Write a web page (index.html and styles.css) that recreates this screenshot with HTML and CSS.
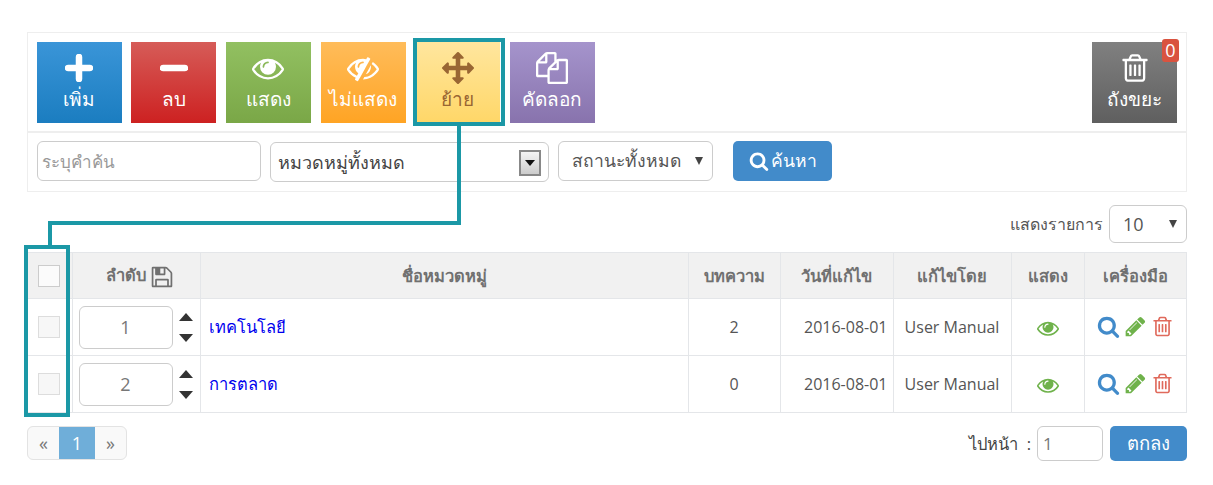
FILE: index.html
```html
<!DOCTYPE html>
<html lang="th">
<head>
<meta charset="utf-8">
<title>หมวดหมู่</title>
<link rel="stylesheet" href="styles.css">
</head>
<body>
<svg class="defs" width="0" height="0" aria-hidden="true">
  <symbol id="i-eye" viewBox="0 0 1792 1792"><path d="M1664 960q-152-236-381-353 61 104 61 225 0 185-131.500 316.500t-316.500 131.500-316.500-131.500-131.500-316.500q0-121 61-225-229 117-381 353 133 205 333.500 326.500t434.500 121.500 434.500-121.500 333.500-326.500zm-720-384q0-20-14-34t-34-14q-125 0-214.500 89.500t-89.500 214.500q0 20 14 34t34 14 34-14 14-34q0-86 61-147t147-61q20 0 34-14t14-34zm848 384q0 34-20 69-140 230-376.500 368.500t-499.500 138.500-499.500-139-376.500-368q-20-35-20-69t20-69q140-229 376.500-368t499.500-139 499.500 139 376.500 368q20 35 20 69z"/></symbol>
  <symbol id="i-eye-slash" viewBox="0 0 1792 1792"><path d="M555 1335l78-141q-87-63-136-159t-49-203q0-121 61-225-229 117-381 353 167 258 427 375zm389-759q0-20-14-34t-34-14q-125 0-214.500 89.500t-89.500 214.500q0 20 14 34t34 14 34-14 14-34q0-86 61-147t147-61q20 0 34-14t14-34zm363-191q0 7-1 9-105 188-315 566t-316 567l-49 89q-10 16-28 16-12 0-134-70-16-10-16-28 0-12 44-87-143-65-263.500-173t-208.500-245q-20-31-20-69t20-69q153-235 380-371t496-136q89 0 180 17l54-97q10-16 28-16 5 0 18 6t31 15.500 33 18.500 31.500 18.500 19.500 11.500q16 10 16 27zm37 447q0 139-79 253.500t-209 164.500l280-502q8 45 8 84zm448 128q0 35-20 69-39 64-109 145-150 172-347.500 267t-419.500 95l74-132q212-18 392.500-137t301.500-307q-115-179-282-294l63-112q95 64 182.500 153t144.500 184q20 34 20 69z"/></symbol>
  <symbol id="i-arrows" viewBox="0 0 1792 1792"><path d="M1792 896q0 26-19 45l-256 256q-19 19-45 19t-45-19-19-45v-128h-384v384h128q26 0 45 19t19 45-19 45l-256 256q-19 19-45 19t-45-19l-256-256q-19-19-19-45t19-45 45-19h128v-384h-384v128q0 26-19 45t-45 19-45-19l-256-256q-19-19-19-45t19-45l256-256q19-19 45-19t45 19 19 45v128h384v-384h-128q-26 0-45-19t-19-45 19-45l256-256q19-19 45-19t45 19l256 256q19 19 19 45t-19 45-45 19h-128v384h384v-128q0-26 19-45t45-19 45 19l256 256q19 19 19 45z"/></symbol>
  <symbol id="i-files" viewBox="0 0 1792 1792"><path d="M1696 384q40 0 68 28t28 68v1216q0 40-28 68t-68 28h-960q-40 0-68-28t-28-68v-288h-544q-40 0-68-28t-28-68v-672q0-40 20-88t48-76l408-408q28-28 76-48t88-20h416q40 0 68 28t28 68v328q68-40 128-40h416zm-544 213l-299 299h299v-299zm-640-384l-299 299h299v-299zm196 647l316-316v-416h-384v416q0 40-28 68t-68 28h-416v640h512v-256q0-40 20-88t48-76zm956 804v-1152h-384v416q0 40-28 68t-68 28h-416v640h896z"/></symbol>
  <symbol id="i-trash" viewBox="0 0 1792 1792"><path d="M704 736v576q0 14-9 23t-23 9h-64q-14 0-23-9t-9-23v-576q0-14 9-23t23-9h64q14 0 23 9t9 23zm256 0v576q0 14-9 23t-23 9h-64q-14 0-23-9t-9-23v-576q0-14 9-23t23-9h64q14 0 23 9t9 23zm256 0v576q0 14-9 23t-23 9h-64q-14 0-23-9t-9-23v-576q0-14 9-23t23-9h64q14 0 23 9t9 23zm128 724v-948h-896v948q0 22 7 40.500t14.500 27 10.500 8.500h832q3 0 10.500-8.500t14.500-27 7-40.500zm-672-1076h448l-48-117q-7-9-17-11h-317q-10 2-17 11zm928 32v64q0 14-9 23t-23 9h-96v948q0 83-47 143.500t-113 60.500h-832q-66 0-113-58.500t-47-141.500v-952h-96q-14 0-23-9t-9-23v-64q0-14 9-23t23-9h309l70-167q15-37 54-63t79-26h320q40 0 79 26t54 63l70 167h309q14 0 23 9t9 23z"/></symbol>
  <symbol id="i-search" viewBox="0 0 1792 1792"><path d="M1216 832q0-185-131.500-316.500t-316.500-131.500-316.500 131.500-131.500 316.500 131.500 316.500 316.500 131.500 316.500-131.500 131.500-316.500zm512 832q0 52-38 90t-90 38q-54 0-90-38l-343-342q-179 124-399 124-143 0-273.500-55.500t-225-150-150-225-55.500-273.500 55.500-273.500 150-225 225-150 273.500-55.500 273.500 55.500 225 150 150 225 55.500 273.500q0 220-124 399l343 343q37 37 37 90z"/></symbol>
  <symbol id="i-pencil" viewBox="0 0 1792 1792"><path d="M491 1536l91-91-235-235-91 91v107h128v128h107zm523-928q0-22-22-22-10 0-17 7l-542 542q-7 7-7 17 0 22 22 22 10 0 17-7l542-542q7-7 7-17zm-54-192l416 416-832 832h-416v-416zm683 96q0 53-37 90l-166 166-416-416 166-165q36-38 90-38 53 0 91 38l235 234q37 39 37 91z"/></symbol>
  <symbol id="i-save" viewBox="0 0 1792 1792"><path d="M512 1536h768v-384h-768v384zm896 0h128v-896q0-14-10-38.500t-20-34.500l-281-281q-10-10-34-20t-39-10v416q0 40-28 68t-68 28h-576q-40 0-68-28t-28-68v-416h-128v1280h128v-416q0-40 28-68t68-28h832q40 0 68 28t28 68v416zm-384-928v-320q0-13-9.500-22.500t-22.500-9.500h-192q-13 0-22.500 9.500t-9.500 22.500v320q0 13 9.500 22.500t22.500 9.500h192q13 0 22.500-9.500t9.500-22.500zm640 32v928q0 40-28 68t-68 28h-1344q-40 0-68-28t-28-68v-1344q0-40 28-68t68-28h928q40 0 88 20t76 48l280 280q28 28 48 76t20 88z"/></symbol>
</svg>

<div class="page">
  <section class="toolbar">
    <a class="tool tool-blue"><svg class="tool-icon plus" viewBox="0 0 28 28"><path d="M14 3v22M3 14h22"/></svg><span>เพิ่ม</span></a>
    <a class="tool tool-red"><svg class="tool-icon plus" viewBox="0 0 28 28"><path d="M3 14h22"/></svg><span>ลบ</span></a>
    <a class="tool tool-green"><svg class="tool-icon"><use href="#i-eye"/></svg><span>แสดง</span></a>
    <a class="tool tool-orange"><svg class="tool-icon"><use href="#i-eye-slash"/></svg><span>ไม่แสดง</span></a>
    <a class="tool tool-yellow"><svg class="tool-icon"><use href="#i-arrows"/></svg><span>ย้าย</span></a>
    <a class="tool tool-purple"><svg class="tool-icon"><use href="#i-files"/></svg><span>คัดลอก</span></a>
    <a class="tool tool-gray"><svg class="tool-icon"><use href="#i-trash"/></svg><span>ถังขยะ</span><b class="badge">0</b></a>
  </section>

  <section class="filters">
    <input class="field search-field" placeholder="ระบุคำค้น">
    <div class="field category"><span>หมวดหมู่ทั้งหมด</span><i class="old-arrow"></i></div>
    <div class="field status"><span>สถานะทั้งหมด</span><i class="caret"></i></div>
    <button class="btn search-btn"><svg class="btn-icon"><use href="#i-search"/></svg>ค้นหา</button>
  </section>

  <div class="per-page">
    <span>แสดงรายการ</span>
    <div class="field per-select"><span>10</span><i class="caret"></i></div>
  </div>

  <table class="grid">
    <colgroup>
      <col class="c-check"><col class="c-order"><col class="c-name"><col class="c-count"><col class="c-date"><col class="c-by"><col class="c-show"><col class="c-tools">
    </colgroup>
    <thead>
      <tr>
        <th><span class="check check-head"></span></th>
        <th class="th-order">ลำดับ <svg class="save"><use href="#i-save"/></svg></th>
        <th>ชื่อหมวดหมู่</th>
        <th>บทความ</th>
        <th>วันที่แก้ไข</th>
        <th>แก้ไขโดย</th>
        <th>แสดง</th>
        <th>เครื่องมือ</th>
      </tr>
    </thead>
    <tbody>
      <tr>
        <td><span class="check"></span></td>
        <td><div class="order"><span class="order-num">1</span><span class="spin"><i class="up"></i><i class="down"></i></span></div></td>
        <td class="name"><a>เทคโนโลยี</a></td>
        <td>2</td>
        <td class="date">2016-08-01</td>
        <td>User Manual</td>
        <td><svg class="show-eye"><use href="#i-eye"/></svg></td>
        <td><div class="acts"><svg class="a-search"><use href="#i-search"/></svg><svg class="a-pencil"><use href="#i-pencil"/></svg><svg class="a-trash"><use href="#i-trash"/></svg></div></td>
      </tr>
      <tr>
        <td><span class="check"></span></td>
        <td><div class="order"><span class="order-num">2</span><span class="spin"><i class="up"></i><i class="down"></i></span></div></td>
        <td class="name"><a>การตลาด</a></td>
        <td>0</td>
        <td class="date">2016-08-01</td>
        <td>User Manual</td>
        <td><svg class="show-eye"><use href="#i-eye"/></svg></td>
        <td><div class="acts"><svg class="a-search"><use href="#i-search"/></svg><svg class="a-pencil"><use href="#i-pencil"/></svg><svg class="a-trash"><use href="#i-trash"/></svg></div></td>
      </tr>
    </tbody>
  </table>

  <div class="footer">
    <nav class="pager"><a>«</a><a class="on">1</a><a>»</a></nav>
    <div class="goto">
      <span>ไปหน้า&nbsp; :</span>
      <input class="field goto-input" value="1">
      <button class="btn ok-btn">ตกลง</button>
    </div>
  </div>

  <div class="mark mark-tool"></div>
  <div class="mark mark-col"></div>
  <div class="mark line-a"></div>
  <div class="mark line-b"></div>
  <div class="mark line-c"></div>
</div>
</body>
</html>
```

FILE: styles.css
```css
* { box-sizing: border-box; }
html, body { margin: 0; height: 100%; background: #fff; }
body { font-family: "Open Sans", "Noto Sans", sans-serif; font-size: 16px; color: #555; overflow: hidden; }
.defs { position: absolute; }
.page { position: relative; width: 1213px; height: 485px; padding: 32px 26px 0 27px; }

.toolbar { display: flex; gap: 9.7px; height: 101px; padding: 9px 9px 0 8.5px; border: 1px solid #eee; border-bottom-width: 2px; }
.tool { position: relative; width: 85px; height: 81px; display: flex; flex-direction: column; align-items: center; color: #fff; font-size: 19px; line-height: 24px; padding-top: 10px; }
.tool span { margin-top: 3px; white-space: nowrap; }
.tool-icon { width: 32px; height: 32px; fill: currentColor; flex: none; }
.tool-icon.plus { width: 28px; height: 28px; margin: 2px 0; fill: none; stroke: currentColor; stroke-width: 6.5; stroke-linecap: round; }
.tool-blue { background: linear-gradient(#3a95d8, #1b7dc0); }
.tool-red { background: linear-gradient(#d65c58, #cd2121); }
.tool-green { background: linear-gradient(#92c061, #7aa747); }
.tool-orange { background: linear-gradient(#ffbc5a, #ffa424); }
.tool-yellow { background: linear-gradient(#ffe69e, #ffd768); color: #996633; }
.tool-purple { background: linear-gradient(#a594cc, #8873ad); }
.tool-gray { background: linear-gradient(#808080, #5f5f5f); margin-left: auto; }
.badge { position: absolute; top: -3px; right: -2px; width: 17px; height: 23px; background: #d9533f; border-radius: 3px; font-weight: 400; font-size: 18px; line-height: 23px; text-align: center; }

.filters { display: flex; align-items: center; height: 59px; padding: 0 9px 2px; border: 1px solid #eee; border-top: 0; font-size: 18px; }
.field { border: 1px solid #ccc; border-radius: 6px; background: #fff; font: inherit; color: #555; height: 40px; display: flex; align-items: center; position: relative; }
.search-field { width: 224px; padding: 0 4px; font-size: 17px; outline: 0; }
.search-field::placeholder { color: #999; opacity: 1; }
.category { width: 279px; margin: 2px 0 0 9px; padding-left: 7px; color: #444; }
.status { width: 155px; margin-left: 9px; padding-left: 13px; font-size: 17.5px; }
.old-arrow { position: absolute; right: 7px; top: 7px; width: 22px; height: 26px; background: linear-gradient(#f4f4f4, #ccc); border: 2px solid #888; }
.old-arrow::after { content: ""; position: absolute; left: 4px; top: 8px; border: 5px solid transparent; border-top: 6px solid #111; border-bottom: 0; }
.caret { position: absolute; right: 9px; top: 15px; border: 4px solid transparent; border-top: 8px solid #444; border-bottom: 0; }
.btn { border: 0; border-radius: 5px; background: #428bca; color: #fff; font: inherit; font-size: 17.5px; display: flex; align-items: center; justify-content: center; height: 40px; padding: 0; }
.search-btn { width: 99px; margin-left: 20px; }
.btn-icon { width: 20px; height: 20px; fill: #fff; margin-right: 2px; }

.per-page { display: flex; justify-content: flex-end; align-items: center; gap: 6px; height: 38px; margin-top: 13px; font-size: 16px; }
.per-select { width: 78px; height: 38px; padding-left: 13px; font-size: 18px; }
.per-select .caret { top: 14px; right: 9px; }

.grid { width: 1159px; margin-top: 9px; table-layout: fixed; border-collapse: collapse; font-size: 16px; }
.c-check { width: 45px; } .c-order { width: 128px; } .c-name { width: 488px; } .c-count { width: 92px; }
.c-date { width: 113px; } .c-by { width: 118px; } .c-show { width: 73px; } .c-tools { width: 102px; }
.grid th, .grid td { border: 1px solid #e4e6e9; text-align: center; padding: 0; }
.grid tr > :first-child { border-left: 0; }
.grid thead tr { height: 46px; }
.grid tbody tr { height: 57px; }
.grid th { background: #f1f1f1; font-weight: 600; color: #707070; font-size: 16.5px; white-space: nowrap; }
.grid .th-order { padding-left: 8px; }
.grid .name { text-align: left; padding-left: 8px; font-size: 16.5px; }
.grid .name a { color: #0000ee; }
.grid .date { text-align: right; padding-right: 5px; }
.check { display: block; width: 22px; height: 22px; margin: 0 auto 0 11px; border: 1px solid #ddd; background: #f7f7f7; }
.check-head { border-color: #ccc; background: #fbfbfb; }
.save { width: 24px; height: 24px; fill: #707070; vertical-align: middle; }
.order { display: flex; align-items: center; padding-left: 6px; }
.order-num { width: 94px; height: 43px; border: 1px solid #ccc; border-radius: 6px; display: flex; align-items: center; justify-content: center; font-size: 18px; color: #777; }
.spin { display: flex; flex-direction: column; gap: 13px; margin-left: 6px; }
.up { border: 7.5px solid transparent; border-bottom: 8px solid #333; border-top: 0; }
.down { border: 7.5px solid transparent; border-top: 8px solid #333; border-bottom: 0; }
.show-eye { width: 22px; height: 22px; fill: #6fb24b; vertical-align: middle; }
.acts { display: flex; align-items: center; justify-content: center; gap: 4px; margin: 0 0 2px 1px; }
.acts svg { width: 23px; height: 23px; }
.a-search { fill: #428bca; }
.a-pencil { fill: #6fb24b; }
.a-trash { fill: #e06a5c; }

.footer { display: flex; justify-content: space-between; margin-top: 13px; }
.pager { display: flex; height: 34px; border: 1px solid #e3e3e3; border-radius: 6px; background: #f9f9f9; overflow: hidden; font-size: 18px; color: #777; }
.pager a { width: 31px; display: flex; align-items: center; justify-content: center; }
.pager .on { width: 36px; background: #6faed9; color: #fff; font-size: 18px; }
.goto { display: flex; align-items: center; font-size: 16.5px; color: #444; height: 35px; }
.goto-input { width: 66px; height: 35px; margin-left: 6px; padding: 0 5px; color: #777; font-size: 17px; outline: 0; }
.ok-btn { width: 77px; height: 35px; margin-left: 7px; font-size: 18.5px; }

.mark { position: absolute; border: 0 solid #1b98a6; pointer-events: none; }
.mark-tool { left: 413px; top: 38px; width: 92px; height: 88px; border-width: 4px; }
.mark-col { left: 24px; top: 245px; width: 46px; height: 172px; border-width: 4px; }
.line-a { left: 457px; top: 126px; width: 4px; height: 99px; background: #1b98a6; }
.line-b { left: 48px; top: 221px; width: 413px; height: 4px; background: #1b98a6; }
.line-c { left: 48px; top: 221px; width: 4px; height: 25px; background: #1b98a6; }
```
